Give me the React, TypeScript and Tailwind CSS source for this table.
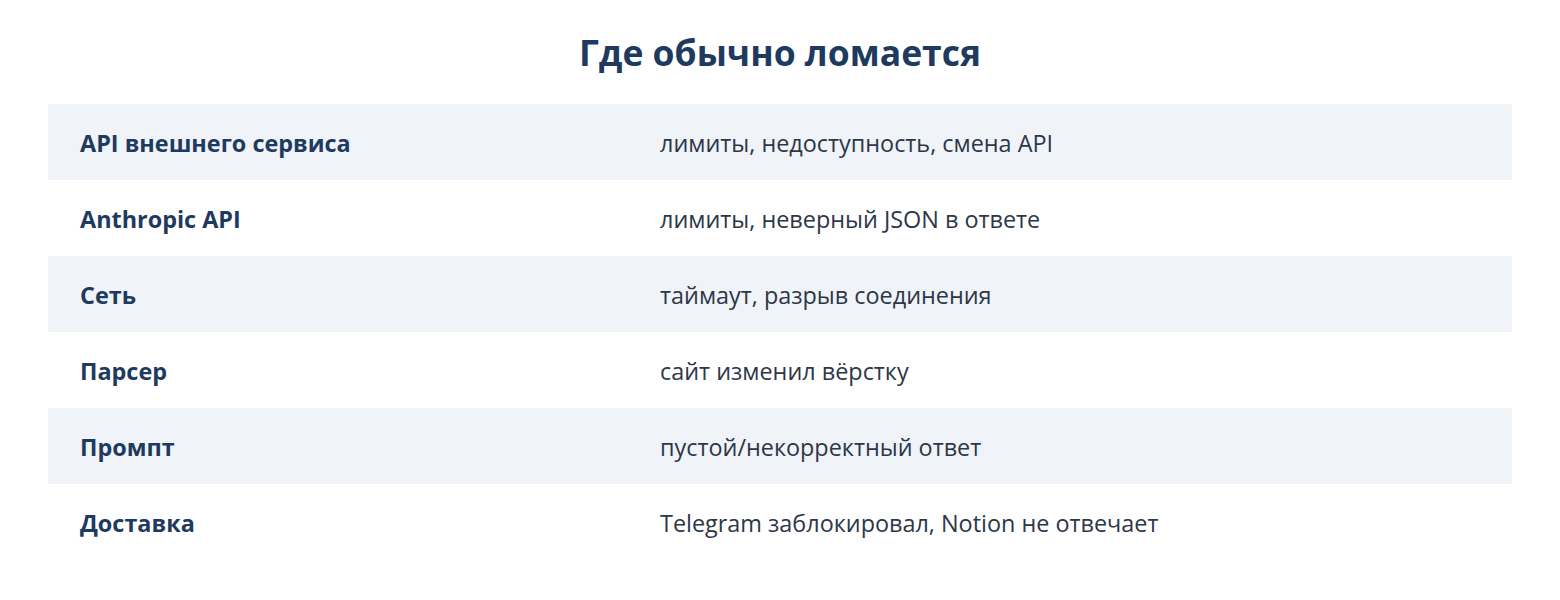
const rows: [string, string][] = [
  ['API внешнего сервиса', 'лимиты, недоступность, смена API'],
  ['Anthropic API', 'лимиты, неверный JSON в ответе'],
  ['Сеть', 'таймаут, разрыв соединения'],
  ['Парсер', 'сайт изменил вёрстку'],
  ['Промпт', 'пустой/некорректный ответ'],
  ['Доставка', 'Telegram заблокировал, Notion не отвечает'],
];

export default function App() {
  return (
    <div className="min-h-[600px] bg-white px-12 pt-[26px] font-['Open_Sans',sans-serif]">
      <h1 className="text-center text-[35.5px] font-bold leading-[52px] text-[#1e3a5f]">
        Где обычно ломается
      </h1>
      <div className="mt-[26px] flex flex-col">
        {rows.map(([k, v], i) => (
          <div
            key={k}
            className={`flex h-[76px] items-center pt-[4px] ${i % 2 === 0 ? 'bg-[#f0f3f8]' : 'bg-white'}`}
          >
            <div className="w-[580px] shrink-0 pl-8 text-[23.4px] font-bold text-[#1e3a5f]">{k}</div>
            <div className="pl-8 text-[23.4px] text-[#2d3748]">{v}</div>
          </div>
        ))}
      </div>
    </div>
  );
}
